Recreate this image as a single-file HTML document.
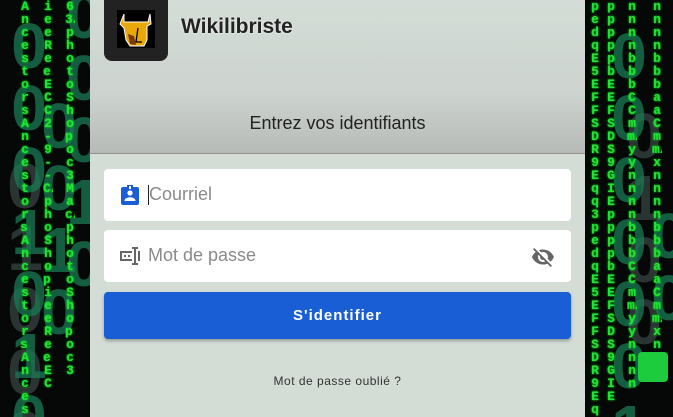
<!DOCTYPE html>
<html><head><meta charset="utf-8"><style>
html,body{margin:0;padding:0;width:673px;height:417px;overflow:hidden;background:#050807;font-family:"Liberation Sans",sans-serif;}
.bg{position:absolute;top:0;left:0;width:673px;height:417px;overflow:hidden;}
.big{position:absolute;font-family:"Liberation Sans",sans-serif;font-weight:bold;color:#1a7a55;opacity:.75;line-height:58px;font-size:64px;writing-mode:vertical-lr;text-orientation:upright;letter-spacing:-10px;height:417px;overflow:hidden}
.dim{color:#2a3433;opacity:1}
.col{position:absolute;font-family:"Liberation Mono",monospace;color:#22e33a;font-size:13px;line-height:13px;width:10px;height:417px;overflow:hidden;word-break:break-all;text-align:center;font-weight:bold;text-shadow:0 0 2px #0f0}
.card{position:absolute;left:90px;top:0;width:495px;height:417px;background:#d3ddd6;}
.head{position:absolute;left:0;top:0;width:495px;height:153px;background:linear-gradient(180deg,#d3ddd6 0%,#cdd3cf 60%,#b7bbb8 100%);border-bottom:1px solid #8f9290}
.logo{position:absolute;left:14px;top:0;width:64px;height:61px;background:#222;border-radius:0 0 8px 8px}
.title{position:absolute;left:91px;top:15px;font-size:21px;font-weight:bold;color:#222;text-shadow:0 0 2px #fff}
.sub{position:absolute;left:0;width:495px;top:113px;text-align:center;font-size:18px;color:#222}
.field{position:absolute;left:14px;width:467px;height:52px;background:#fff;border-radius:4px}
.field span{position:absolute;left:44px;top:15px;font-size:18px;color:#8a8a8a}
.btn{position:absolute;left:14px;top:292px;width:467px;height:47px;background:#1a5ed6;border-radius:4px;color:#fff;font-size:15px;font-weight:bold;letter-spacing:1px;text-align:center;line-height:47px;box-shadow:0 2px 3px rgba(0,0,0,.3)}
.forgot{position:absolute;left:0;width:495px;top:374px;text-align:center;font-size:12px;color:#333;letter-spacing:.5px}
.gbtn{position:absolute;left:638px;top:352px;width:30px;height:30px;background:#1ccc3c;border-radius:4px}
</style></head><body>
<div class="bg">
<div class="big dim" style="left:-4px;top:150px">0100010</div>
<div class="big" style="left:0;top:10px">0001010</div>
<div class="big" style="left:30px;top:90px">0010</div>
<div class="big" style="left:55px;top:-20px">00010</div>
<div class="col" style="left:20px;top:0">AncestorsAncestors.Ancestors.AncestorsA</div>
<div class="col" style="left:43px;top:0">ieeRee.ECC2-9--C/phoShop.ieeRee.EC</div>
<div class="col" style="left:65px;top:0">63/photoShop.oc3Mac/photoShop.oc3</div>
<div class="big dim" style="left:615px;top:100px">0100</div>
<div class="big" style="left:600px;top:20px">0000001</div>
<div class="big" style="left:640px;top:200px">00</div>
<div class="col" style="left:590px;top:0">pedqE5EFFSDR9Eqq3pedqE5EFFSDR9Eqq3</div>
<div class="col" style="left:606px;top:0">pppppbEEFSDS9GIEppppbEEFSDS9GIE</div>
<div class="col" style="left:627px;top:0">nnnnbbbCCmm/yynnnnbbbCCmm/yynnnn</div>
<div class="col" style="left:652px;top:0">nnnnbbbaaCmm/xnnnnbbbaaCmm/xnnn</div>
<div class="gbtn"></div>
</div>
<div class="card">
<div class="head">
<div class="logo"><svg width="64" height="61" viewBox="0 0 64 61"><rect x="13" y="10" width="38" height="38" fill="#000"/><path d="M20 14 L20 22 L44 22 L46 14 L47 24 L43 26 L43 40 L40 46 L26 46 L22 40 L20 28 L16 24 Z" fill="#e8a80a" stroke="#fff" stroke-width="1"/><path d="M24 34 L26 44 L32 45 L30 36 Z" fill="#7a3a08"/><path d="M34 28 L32 42 L38 42" fill="none" stroke="#000" stroke-width="1.3"/></svg></div>
<div class="title">Wikilibriste</div>
<div class="sub">Entrez vos identifiants</div>
</div>
<div class="field" style="top:169px"><svg style="position:absolute;left:14px;top:14px" width="24" height="24" viewBox="0 0 24 24"><path d="M5 4h4V2h6v2h4a2 2 0 0 1 2 2v14a2 2 0 0 1-2 2H5a2 2 0 0 1-2-2V6a2 2 0 0 1 2-2z" fill="#1a5ed6"/><circle cx="12" cy="10" r="2.6" fill="#fff"/><path d="M6.5 18c0-2.5 3-3.7 5.5-3.7s5.5 1.2 5.5 3.7z" fill="#fff"/><rect x="11" y="3" width="2" height="3" fill="#fff"/></svg><div style="position:absolute;left:44px;top:16px;width:1px;height:20px;background:#222"></div><span style="left:45px">Courriel</span></div>
<div class="field" style="top:230px"><svg style="position:absolute;left:14px;top:14px" width="24" height="24" viewBox="0 0 24 24"><path d="M2 7h12v2H4v6h10v2H2z M20 7h2v10h-2z" fill="#666"/><path d="M14 3h6v2h-2v14h2v2h-6v-2h2V5h-2z" fill="#666"/><circle cx="7" cy="12" r="1.2" fill="#666"/><circle cx="11" cy="12" r="1.2" fill="#666"/></svg><span>Mot de passe</span>
<svg style="position:absolute;left:427px;top:15px" width="24" height="24" viewBox="0 0 24 24"><path d="M12 7c2.8 0 5 2.2 5 5 0 .6-.1 1.3-.4 1.8l2.9 2.9c1.5-1.3 2.7-2.9 3.4-4.7-1.7-4.4-6-7.5-11-7.5-1.4 0-2.7.3-4 .7l2.2 2.2c.6-.3 1.2-.4 1.9-.4zM2 4.3l2.3 2.3.5.4C3.1 8.3 1.8 10 1 12c1.7 4.4 6 7.5 11 7.5 1.6 0 3-.3 4.4-.8l.4.4 2.9 2.9 1.3-1.3L3.3 3zM7.5 9.8l1.6 1.6c0 .2-.1.4-.1.6 0 1.7 1.3 3 3 3 .2 0 .4 0 .6-.1l1.6 1.6c-.7.3-1.4.5-2.2.5-2.8 0-5-2.2-5-5 0-.8.2-1.5.5-2.2z" fill="#666"/></svg></div>
<div class="btn">S'identifier</div>
<div class="forgot">Mot de passe oublié ?</div>
</div>
</body></html>
